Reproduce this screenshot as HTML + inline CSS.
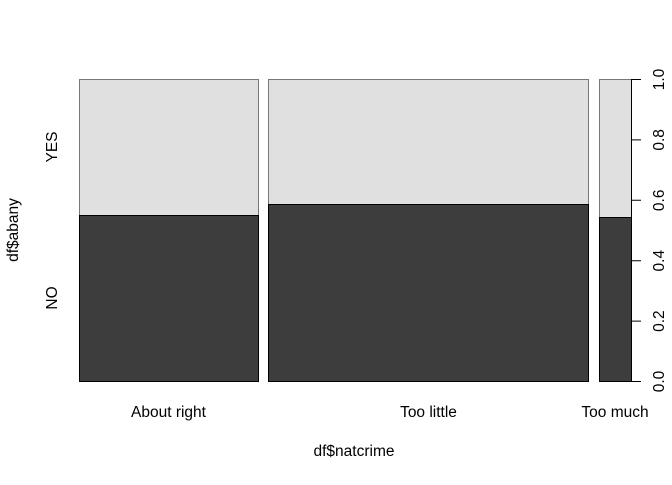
<!DOCTYPE html>
<html><head><style>body{margin:0;background:#fff}</style></head><body>
<svg width="672" height="480" xmlns="http://www.w3.org/2000/svg" font-family="Liberation Sans, Arial, sans-serif" font-size="15.5">
<rect width="672" height="480" fill="#fff"/>
<g stroke="#000" stroke-width="1">
<rect x="79.5" y="79.5" width="179" height="136" fill="#e0e0e0" stroke="#777"/>
<rect x="79.5" y="215.5" width="179" height="166" fill="#3d3d3d"/>
<rect x="268.5" y="79.5" width="320" height="125" fill="#e0e0e0" stroke="#777"/>
<rect x="268.5" y="204.5" width="320" height="177" fill="#3d3d3d"/>
<rect x="599.5" y="79.5" width="32" height="138" fill="#e0e0e0" stroke="#777"/>
<rect x="599.5" y="217.5" width="32" height="164" fill="#3d3d3d"/>
<path d="M631.5 79.5V381.5M631 79.5h10M631 139.9h10M631 200.3h10M631 260.7h10M631 321.1h10M631 381.5h10" fill="none"/>
</g>
<g fill="#000">
<text x="168.5" y="417" text-anchor="middle">About right</text>
<text x="428.5" y="417" text-anchor="middle">Too little</text>
<text x="615" y="417" text-anchor="middle">Too much</text>
<text x="354" y="456" text-anchor="middle">df$natcrime</text>
<g text-anchor="middle">
<text transform="translate(664,381.5) rotate(-90)">0.0</text>
<text transform="translate(664,321.1) rotate(-90)">0.2</text>
<text transform="translate(664,260.7) rotate(-90)">0.4</text>
<text transform="translate(664,200.3) rotate(-90)">0.6</text>
<text transform="translate(664,139.9) rotate(-90)">0.8</text>
<text transform="translate(664,79.5) rotate(-90)">1.0</text>
<text transform="translate(57,298) rotate(-90)">NO</text>
<text transform="translate(57,147) rotate(-90)">YES</text>
<text transform="translate(18,230) rotate(-90)">df$abany</text>
</g>
</g>
</svg>
</body></html>
